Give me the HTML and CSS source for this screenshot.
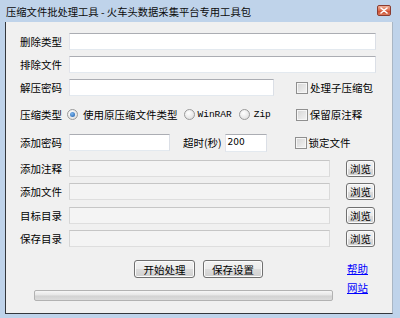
FILE: index.html
```html
<!DOCTYPE html>
<html>
<head>
<meta charset="utf-8">
<link rel="stylesheet" href="styles.css">
</head>
<body>
<div class="window">
  <div class="titlebar">
    <span class="title">压缩文件批处理工具 - 火车头数据采集平台专用工具包</span>
    <span class="close"><svg width="8" height="7" viewBox="0 0 8 7"><path d="M1 1 L7 6 M7 1 L1 6" stroke="#fff" stroke-width="1.6" stroke-linecap="round"/></svg></span>
  </div>
  <div class="client">
    <div class="row r1"><span class="lbl">删除类型</span><span class="input w-full"></span></div>
    <div class="row r2"><span class="lbl">排除文件</span><span class="input w-full"></span></div>
    <div class="row r3"><span class="lbl">解压密码</span><span class="input w-mid"></span>
      <span class="check"><span class="box"></span>处理子压缩包</span></div>
    <div class="row r4"><span class="lbl">压缩类型</span>
      <span class="radio r-orig"><span class="dot on"></span>使用原压缩文件类型</span>
      <span class="radio r-rar"><span class="dot"></span><span class="mono">WinRAR</span></span>
      <span class="radio r-zip"><span class="dot"></span><span class="mono">Zip</span></span>
      <span class="check c-keep"><span class="box"></span>保留原注释</span></div>
    <div class="row r5"><span class="lbl">添加密码</span><span class="input w-short"></span>
      <span class="timeout">超时(秒)</span><span class="input w-num">200</span>
      <span class="check c-lock"><span class="box"></span>锁定文件</span></div>
    <div class="row r6"><span class="lbl">添加注释</span><span class="input dis"></span><span class="btn browse">浏览</span></div>
    <div class="row r7"><span class="lbl">添加文件</span><span class="input dis"></span><span class="btn browse">浏览</span></div>
    <div class="row r8"><span class="lbl">目标目录</span><span class="input dis"></span><span class="btn browse">浏览</span></div>
    <div class="row r9"><span class="lbl">保存目录</span><span class="input dis"></span><span class="btn browse">浏览</span></div>
    <div class="bottom">
      <div class="bottom-left">
        <div class="actions"><span class="btn act">开始处理</span><span class="btn act act2">保存设置</span></div>
        <div class="progress"></div>
      </div>
      <div class="links"><a class="link">帮助</a><a class="link">网站</a></div>
    </div>
  </div>
</div>
</body>
</html>
```
FILE: styles.css
```css
html, body { margin: 0; padding: 0; }
body { width: 400px; height: 318px; overflow: hidden; }
.window {
  width: 400px; height: 318px; box-sizing: border-box;
  background: #bfd3ea;
  display: flex; flex-direction: column;
  font-family: "Noto Sans CJK SC", "Noto Sans", sans-serif;
  font-size: 10.5px; color: #000;
}
.titlebar {
  height: 22px; flex: none; display: flex; align-items: center;
  padding: 0 9px 0 6px; box-sizing: border-box;
}
.title { flex: 1; font-size: 10.3px; line-height: 12px; color: #0b0b0b; white-space: nowrap; margin-top: 1px; }
.close {
  width: 14px; height: 11px; box-sizing: border-box; margin-top: -1px;
  border: 1px solid #8a3c30; border-radius: 2px;
  background: linear-gradient(#f0b098, #dc6a4c 50%, #c8442a 51%, #dc7a5c);
  display: flex; align-items: center; justify-content: center;
}
.client {
  margin-left: 5px; width: 388px; height: 292px; box-sizing: border-box;
  background: #f0f0f0;
  border-left: 1px solid #34383d; border-bottom: 1px solid #34383d; border-right: 1px solid #a9b6c4;
  padding: 11px 0 0 14px;
  display: flex; flex-direction: column;
}
.row { display: flex; align-items: center; height: 17px; flex: none; }
.r2 { margin-top: 6px; }
.r3 { margin-top: 6px; }
.r4 { margin-top: 10px; }
.r5 { margin-top: 11px; }
.r6 { margin-top: 9px; }
.r7 { margin-top: 6px; }
.r8 { margin-top: 7px; }
.r9 { margin-top: 6px; }
.lbl { width: 49px; flex: none; line-height: 13px; }
.input {
  height: 17px; box-sizing: border-box; background: #fff; flex: none;
  border: 1px solid; border-color: #abadb3 #dbdfe6 #e3e9ef #e2e3ea;
  font-family: "DejaVu Sans", sans-serif; font-size: 9px; line-height: 15px; padding-left: 2px;
}
.w-full { width: 307px; }
.w-mid { width: 205px; }
.w-short { width: 101px; }
.w-num { width: 42px; height: 18px; margin-left: 3px; }
.dis { width: 261px; background: #f4f4f4; border-color: #c6c6c6 #dadada #dedede #d6d6d6; }
.check { display: flex; align-items: center; line-height: 13px; margin-left: 22px; }
.c-keep { margin-left: 0; }
.box {
  width: 12px; height: 12px; box-sizing: border-box; margin-right: 2px; flex: none;
  border: 1px solid #8f8f8f;
  background: linear-gradient(135deg, #d4d4d4, #f4f4f4);
  box-shadow: inset 0 0 0 1px #f6f6f6;
}
.radio { display: flex; align-items: center; line-height: 13px; }
.dot {
  width: 11px; height: 11px; box-sizing: border-box; border-radius: 50%; flex: none;
  border: 1px solid #9a9a9a; margin-right: 5px;
  background: radial-gradient(circle at 40% 35%, #fff, #d8d8d8);
  display: flex; align-items: center; justify-content: center;
}
.dot.on::after {
  content: ""; width: 5px; height: 5px; border-radius: 50%;
  background: radial-gradient(circle at 40% 35%, #7fb8f0, #1a5aa8);
}
.r-orig { margin-left: -2px; }
.r-rar { margin-left: 6px; }
.r-rar .dot { margin-right: 3px; }
.r-zip { margin-left: 7px; }
.r-zip .dot { margin-right: 4px; }
.mono { font-family: "Liberation Mono", monospace; font-size: 9.5px; }
.r-zip .mono { margin-right: 25px; }
.timeout { margin-left: 13px; }
.c-lock { margin-left: 28px; }
.btn {
  box-sizing: border-box; border: 1px solid #707070; border-radius: 3px;
  background: linear-gradient(#f2f2f2 0%, #ebebeb 50%, #dddddd 51%, #cfcfcf 100%);
  display: flex; align-items: center; justify-content: center; flex: none;
  line-height: 13px; box-shadow: inset 0 0 0 1px #fbfbfb;
}
.browse { width: 29px; height: 17px; margin-left: 16px; }
.bottom { display: flex; margin-top: 13px; }
.bottom-left { width: 327px; flex: none; display: flex; flex-direction: column; }
.actions { display: flex; margin-left: 114px; }
.act { width: 61px; height: 18px; }
.act2 { width: 60px; margin-left: 8px; }
.progress {
  margin: 12px 0 0 14px; width: 299px; height: 11px; box-sizing: border-box;
  border: 1px solid #b2b2b2; border-radius: 2px;
  background: linear-gradient(#f6f6f6, #e6e6e6 45%, #d2d2d2 55%, #dcdcdc);
}
.links { display: flex; flex-direction: column; margin-top: 2px; }
.link { color: #0000ff; text-decoration: underline; line-height: 13px; height: 13px; margin-bottom: 6px; cursor: pointer; }
```
